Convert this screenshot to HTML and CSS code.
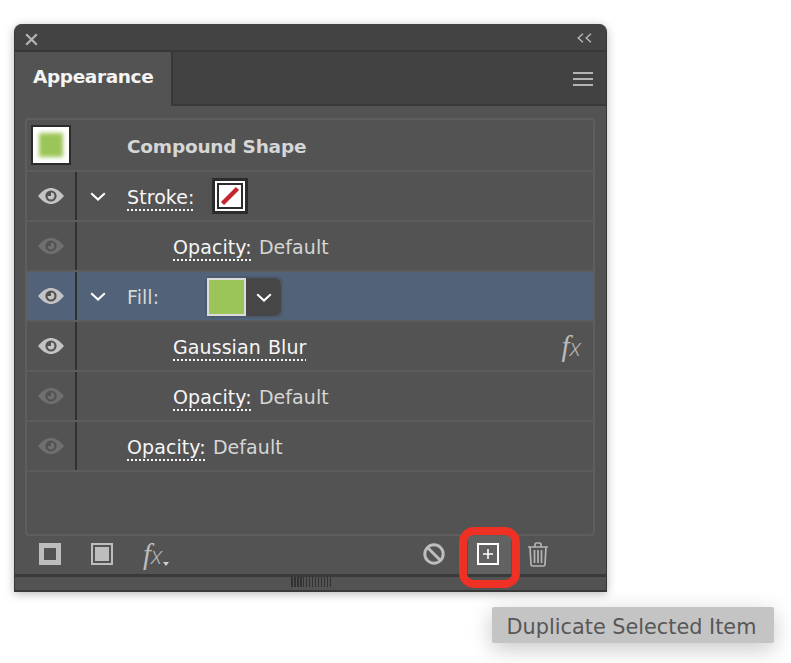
FILE: index.html
```html
<!DOCTYPE html>
<html lang="en">
<head>
<meta charset="utf-8">
<title>Appearance</title>
<link rel="stylesheet" href="styles.css">
</head>
<body>
<svg class="defs" width="0" height="0" aria-hidden="true">
  <defs>
    <symbol id="eye" viewBox="0 0 26 16">
      <path d="M0 8C5 2 9 0 13 0s8 2 13 8c-5 6-9 8-13 8S5 14 0 8Z" fill="currentColor"/>
      <circle cx="13" cy="8" r="5.6" fill="#535353"/>
      <path d="M13 4.600a3.400 3.400 0 1 1-3.400 3.400H13Z" fill="currentColor"/>
    </symbol>
    <symbol id="chev" viewBox="0 0 16 9">
      <path d="M1.200 1.200 8 7.600l6.800-6.400" fill="none" stroke="currentColor" stroke-width="2"/>
    </symbol>
  </defs>
</svg>
<main class="panel">
  <header class="titlebar">
    <svg class="close" width="13" height="13" viewBox="0 0 13 13"><path d="M1.200 1.200l10.600 10.600M11.800 1.200 1.200 11.800" stroke="#b4b4b4" stroke-width="2.200"/></svg>
    <svg class="collapse" width="15" height="10" viewBox="0 0 15 10"><path d="M6 .8 1.200 5 6 9.200M14 .8 9.200 5 14 9.200" fill="none" stroke="#b8b8b8" stroke-width="1.400"/></svg>
  </header>
  <nav class="tabbar">
    <div class="tab">Appearance</div>
    <div class="menu"><i></i><i></i><i></i></div>
  </nav>
  <section class="body">
    <div class="list">
      <div class="row row-head">
        <div class="thumb"><div class="thumb-blur"></div></div>
        <div class="text name-bold">Compound Shape</div>
      </div>
      <div class="row">
        <div class="eye-col"><svg class="eye"><use href="#eye"/></svg></div>
        <div class="chev-col"><svg class="chev"><use href="#chev"/></svg></div>
        <div class="text"><span class="link">Stroke:</span></div>
        <div class="stroke-swatch"><div class="stroke-in"><svg width="22" height="22" viewBox="0 0 22 22"><path d="M3.500 18.500 18.500 3.500" stroke="#c4242e" stroke-width="4.500"/></svg></div></div>
      </div>
      <div class="row">
        <div class="eye-col dim"><svg class="eye"><use href="#eye"/></svg></div>
        <div class="chev-col"></div>
        <div class="text indent"><span class="link">Opacity:</span> <span class="val">Default</span></div>
      </div>
      <div class="row row-sel">
        <div class="eye-col"><svg class="eye"><use href="#eye"/></svg></div>
        <div class="chev-col"><svg class="chev"><use href="#chev"/></svg></div>
        <div class="text val fill-label">Fill:</div>
        <div class="fill-ctl">
          <div class="fill-swatch"></div>
          <div class="fill-drop"><svg class="chev"><use href="#chev"/></svg></div>
        </div>
      </div>
      <div class="row">
        <div class="eye-col"><svg class="eye"><use href="#eye"/></svg></div>
        <div class="chev-col"></div>
        <div class="text indent"><span class="link">Gaussian Blur</span></div>
        <span class="fx fx-row"><span class="fx-f">f</span>x</span>
      </div>
      <div class="row">
        <div class="eye-col dim"><svg class="eye"><use href="#eye"/></svg></div>
        <div class="chev-col"></div>
        <div class="text indent"><span class="link">Opacity:</span> <span class="val">Default</span></div>
      </div>
      <div class="row">
        <div class="eye-col dim"><svg class="eye"><use href="#eye"/></svg></div>
        <div class="chev-col"></div>
        <div class="text"><span class="link">Opacity:</span> <span class="val">Default</span></div>
      </div>
    </div>
    <footer class="tools">
      <svg class="tool-a" width="22" height="22" viewBox="0 0 22 22"><rect x="2.500" y="2.500" width="17" height="17" fill="none" stroke="#bdbdbd" stroke-width="5"/></svg>
      <svg class="tool-b" width="22" height="22" viewBox="0 0 22 22"><rect x="1" y="1" width="20" height="20" fill="none" stroke="#bdbdbd" stroke-width="2"/><rect x="4" y="4" width="14" height="14" fill="#bdbdbd"/></svg>
      <div class="tool-fx"><span class="fx"><span class="fx-f">f</span>x</span><i class="caret"></i></div>
      <div class="spacer"></div>
      <svg class="tool-no" width="22" height="22" viewBox="0 0 22 22"><circle cx="11" cy="11" r="9.200" fill="none" stroke="#bdbdbd" stroke-width="3"/><path d="M4.500 4.500l13 13" stroke="#bdbdbd" stroke-width="3"/></svg>
      <div class="tool-dup">
        <svg width="22" height="22" viewBox="0 0 22 22"><rect x="1" y="1" width="20" height="20" fill="none" stroke="#fff" stroke-width="2"/><path d="M11 6v10M6 11h10" stroke="#fff" stroke-width="1.600"/></svg>
      </div>
      <svg class="tool-trash" width="22" height="25" viewBox="0 0 22 25"><path d="M1 5h20M8 5V2.500A1.500 1.500 0 0 1 9.500 1h3A1.500 1.500 0 0 1 14 2.500V5M3 5l1 17.500A1.500 1.500 0 0 0 5.500 24h11a1.500 1.500 0 0 0 1.500-1.500L19 5M7.500 8v13M11 8v13M14.500 8v13" fill="none" stroke="#b4b4b4" stroke-width="1.700"/></svg>
    </footer>
  </section>
  <div class="grip"><div class="grip-marks"></div></div>
  <div class="highlight"></div>
</main>
<div class="tooltip"><span class="tooltip-text">Duplicate Selected Item</span></div>
</body>
</html>
```
FILE: styles.css
```css
* { box-sizing: border-box; }
html, body { margin: 0; height: 100%; background: #fff; overflow: hidden; }
body {
  position: relative;
  padding: 24px 0 0 14px;
  font-family: "DejaVu Sans", "Liberation Sans", sans-serif;
}
.defs { position: absolute; }
.panel {
  position: relative;
  width: 593px;
  height: 568px;
  display: flex;
  flex-direction: column;
  background: #535353;
  border: solid #383838;
  border-width: 0 1px 2px 1px;
  border-radius: 8px 8px 0 0;
  box-shadow: 0 2px 10px rgba(0,0,0,.28);
}
.titlebar {
  height: 28px;
  flex: none;
  display: flex;
  align-items: center;
  justify-content: space-between;
  padding: 5px 14px 0 10px;
  background: #434343;
  border-bottom: 2px solid #383838;
  border-radius: 8px 8px 0 0;
}
.collapse { margin-top: -3px; }
.tabbar {
  height: 54px;
  flex: none;
  display: flex;
  justify-content: space-between;
  align-items: stretch;
  background: #424242;
  border-bottom: 2px solid #383838;
}
.tab {
  width: 158px;
  margin-bottom: -2px;
  padding: 0 0 5px 18px;
  display: flex;
  align-items: center;
  background: #535353;
  border-right: 2px solid #383838;
  color: #f4f4f4;
  font-size: 18.500px;
  font-weight: 700;
  letter-spacing: -.38px;
}
.menu {
  width: 20px;
  margin: 20px 13px 0 0;
  display: flex;
  flex-direction: column;
  gap: 4px;
}
.menu i { display: block; height: 2px; background: #b4b4b4; }
.body { flex: 1; display: flex; flex-direction: column; padding: 12px 11px 0 10px; }
.list {
  height: 418px;
  flex: none;
  border: 2px solid #5e5e5e;
  border-radius: 4px;
}
.row {
  height: 50px;
  display: flex;
  align-items: center;
  border-bottom: 2px solid #5c5c5c;
  font-size: 19px;
  letter-spacing: .08px;
  word-spacing: 1px;
  color: #f4f4f4;
}
.row-head { height: 52px; padding-left: 4px; }
.text { margin-top: 2px; }
.thumb {
  width: 40px;
  height: 40px;
  background: #fff;
  border: 2px solid #2c2c2c;
  padding: 6px;
  overflow: hidden;
}
.thumb-blur { width: 24px; height: 24px; background: #9bc558; filter: blur(2px); }
.name-bold {
  margin-left: 56px;
  font-size: 18.500px;
  font-weight: 700;
  letter-spacing: -.22px;
  word-spacing: 0;
  color: #d6d6d6;
}
.eye-col {
  width: 50px;
  height: 100%;
  display: flex;
  align-items: center;
  justify-content: center;
  border-right: 2px solid #303030;
  color: #c4c4c4;
}
.eye-col.dim { color: #6f6f6f; }
.eye { width: 26px; height: 16px; }
.chev { width: 16px; height: 9px; color: #fff; }
.chev-col { width: 50px; display: flex; justify-content: center; padding-right: 8px; }
.indent { margin-left: 46px; }
.link {
  color: #f6f6f6;
  text-decoration: underline dotted 2px;
  text-underline-offset: 5px;
}
.val { color: #d6d6d6; }
.stroke-swatch {
  width: 36px;
  height: 36px;
  margin-left: 17px;
  padding: 2px;
  background: #fff;
  border: 3px solid #2c2c2c;
}
.stroke-in {
  width: 100%;
  height: 100%;
  background: #fff;
  border: 2px solid #2c2c2c;
  display: flex;
  align-items: center;
  justify-content: center;
  overflow: hidden;
}
.stroke-in svg { flex: none; }
.row-sel { background: #526278; }
.row-sel .eye-col circle { fill: #526278; }
.fill-label { width: 80px; }
.fill-ctl {
  display: flex;
  width: 78px;
  height: 42px;
  margin-top: 2px;
  margin-left: -2px;
  padding: 2px;
  background: #4c5a6e;
  border-radius: 6px;
}
.fill-swatch { width: 39px; background: #9bc558; border: 2px solid #dcdcdc; }
.fill-drop {
  flex: 1;
  display: flex;
  align-items: center;
  justify-content: center;
  background: #464646;
  border-radius: 0 7px 7px 0;
}
.fx {
  font-family: "Open Sans", sans-serif;
  font-style: italic;
  font-weight: 300;
  font-size: 24px;
  line-height: 1;
  color: #bcbcbc;
}
.fx-f { font-family: "Liberation Serif", serif; font-weight: 400; font-size: 29px; }
.fx-row { margin-left: auto; margin-right: 12px; }
.tools { flex: 1; display: flex; align-items: center; padding-bottom: 2px; }
.tool-a { margin-left: 14px; }
.tool-b { margin-left: 30px; }
.tool-fx { margin-left: 30px; display: flex; align-items: flex-end; }
.caret {
  width: 0;
  height: 0;
  margin: 0 0 3px 1px;
  border: 3px solid transparent;
  border-top: 4px solid #d0d0d0;
  border-bottom: 0;
}
.spacer { flex: 1; }
.tool-dup {
  width: 43px;
  height: 38px;
  margin: 0 0 -2px 23px;
  padding: 0 4px 2px 0;
  display: flex;
  align-items: center;
  justify-content: center;
  background: #626262;
}
.tool-trash { margin-left: 16px; margin-right: 46px; }
.grip {
  height: 16px;
  flex: none;
  display: flex;
  justify-content: center;
  background: #535353;
  border-top: 3px solid #3a3a3a;
}
.grip-marks {
  width: 40px;
  height: 10px;
  background: repeating-linear-gradient(90deg, #333 0 1.500px, transparent 1.500px 3px);
}
.highlight {
  position: absolute;
  left: 444px;
  top: 503px;
  width: 61px;
  height: 61px;
  border: 8px solid #ee3124;
  border-radius: 15px;
}
.tooltip {
  position: absolute;
  left: 492px;
  top: 607px;
  width: 282px;
  height: 36px;
  display: flex;
  align-items: center;
  justify-content: center;
  background: #c4c4c4;
  border-radius: 2px;
  color: #575757;
  font-size: 20.800px;
  box-shadow: 0 6px 22px rgba(0,0,0,.22);
}
.tooltip-text { margin: 3px 3px 0 0; }
```
